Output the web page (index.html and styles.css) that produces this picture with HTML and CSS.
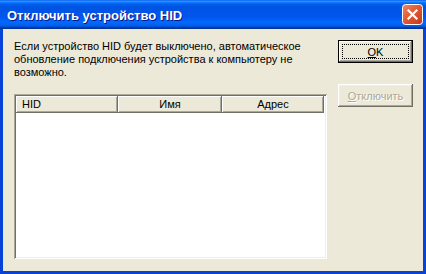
FILE: index.html
```html
<!DOCTYPE html>
<html lang="ru">
<head>
<meta charset="utf-8">
<title>Отключить устройство HID</title>
<link rel="stylesheet" href="styles.css">
</head>
<body>
	<div class="window">
		<div class="titlebar">
			<span class="title">Отключить устройство HID</span>
			<div class="close">
				<svg width="21" height="21" viewBox="0 0 21 21">
					<defs>
						<linearGradient id="cg" x1="0" y1="0" x2="1" y2="1">
							<stop offset="0" stop-color="#EC8A6C"/>
							<stop offset="0.45" stop-color="#E05A35"/>
							<stop offset="1" stop-color="#C23B17"/>
						</linearGradient>
					</defs>
					<rect x="0.5" y="0.5" width="20" height="20" rx="3" fill="url(#cg)" stroke="#fff"/>
					<path d="M6.5 6.5 L14.5 14.5 M14.5 6.5 L6.5 14.5" stroke="#fff" stroke-width="2.2" stroke-linecap="square"/>
				</svg>
			</div>
		</div>
		<div class="client">
			<div class="main">
				<p class="msg">Если устройство HID будет выключено, автоматическое<br>обновление подключения устройства к компьютеру не<br>возможно.</p>
				<div class="list">
					<div class="list-head">
						<div class="col col-hid">HID</div>
						<div class="col col-name">Имя</div>
						<div class="col col-addr">Адрес</div>
					</div>
				</div>
			</div>
			<div class="actions">
				<button class="btn btn-default"><span class="focus"><u>O</u>K</span></button>
				<button class="btn" disabled><span><u>О</u>тключить</span></button>
			</div>
		</div>
	</div>
</body>
</html>
```

FILE: styles.css
```css
* {
	box-sizing: border-box;
}

html, body {
	margin: 0;
	padding: 0;
	width: 426px;
	height: 274px;
	overflow: hidden;
	font-family: "Liberation Sans", Arial, sans-serif;
	font-size: 11px;
	color: #000;
}

.window {
	width: 426px;
	height: 274px;
	display: flex;
	flex-direction: column;
	background: #003092;
}

/* title bar */
.titlebar {
	height: 29px;
	display: flex;
	align-items: center;
	justify-content: space-between;
	padding: 2px 3px 0 7px;
	background: linear-gradient(to bottom, #0058EE 0%, #3593FF 4%, #288EFF 6%, #127DFF 8%, #036FFC 10%, #0262EE 14%, #0057E5 20%, #0054E3 24%, #0055EB 56%, #005BF5 66%, #026AFE 76%, #0062EF 86%, #0052D6 92%, #0040AB 94%, #003092 100%);
}
.title {
	color: #fff;
	font-weight: bold;
	font-size: 13px;
	text-shadow: 1px 1px #0A1883;
}
.close {
	width: 21px;
	height: 21px;
	margin-top: -2px;
	display: flex;
}

/* client area */
.client {
	flex: 1;
	display: flex;
	gap: 11px;
	padding: 11px 10px 0 11px;
	background: #ECE9D8;
	border-style: solid;
	border-color: #0842D6;
	border-width: 0 3px 3px 3px;
}
.main {
	width: 313px;
	display: flex;
	flex-direction: column;
}
.msg {
	margin: 0;
	line-height: 13px;
	white-space: nowrap;
}

/* list view */
.list {
	margin-top: 15px;
	height: 165px;
	padding: 2px;
	background: #fff;
	box-shadow: inset 1px 1px #ACA899, inset -1px -1px #fff, inset 2px 2px #716F64, inset -2px -2px #F1EFE2;
}
.list-head {
	display: flex;
	height: 17px;
}
.col {
	height: 17px;
	line-height: 16px;
	background: #ECE9D8;
	box-shadow: inset -1px -1px #716F64, inset 1px 1px #fff, inset -2px -2px #ACA899;
}
.col-hid {
	width: 102px;
	padding-left: 6px;
}
.col-name {
	width: 104px;
	text-align: center;
}
.col-addr {
	width: 102px;
	text-align: center;
}

/* buttons */
.actions {
	width: 75px;
	display: flex;
	flex-direction: column;
	gap: 21px;
}
.btn {
	width: 75px;
	height: 23px;
	padding: 3px;
	display: flex;
	border: none;
	background: #ECE9D8;
	font-family: inherit;
	font-size: 11px;
	color: #000;
	box-shadow: inset -1px -1px #716F64, inset 1px 1px #fff, inset -2px -2px #ACA899, inset 2px 2px #F1EFE2;
}
.btn span {
	flex: 1;
	display: flex;
	align-items: center;
	justify-content: center;
}
.btn-default {
	box-shadow: inset 0 0 0 1px #000, inset -2px -2px #716F64, inset 2px 2px #fff, inset -3px -3px #ACA899;
}
.btn-default .focus {
	border: 1px dotted #000;
	margin: 1px;
}
.btn:disabled {
	color: #ACA899;
	text-shadow: 1px 1px #fff;
}
```
